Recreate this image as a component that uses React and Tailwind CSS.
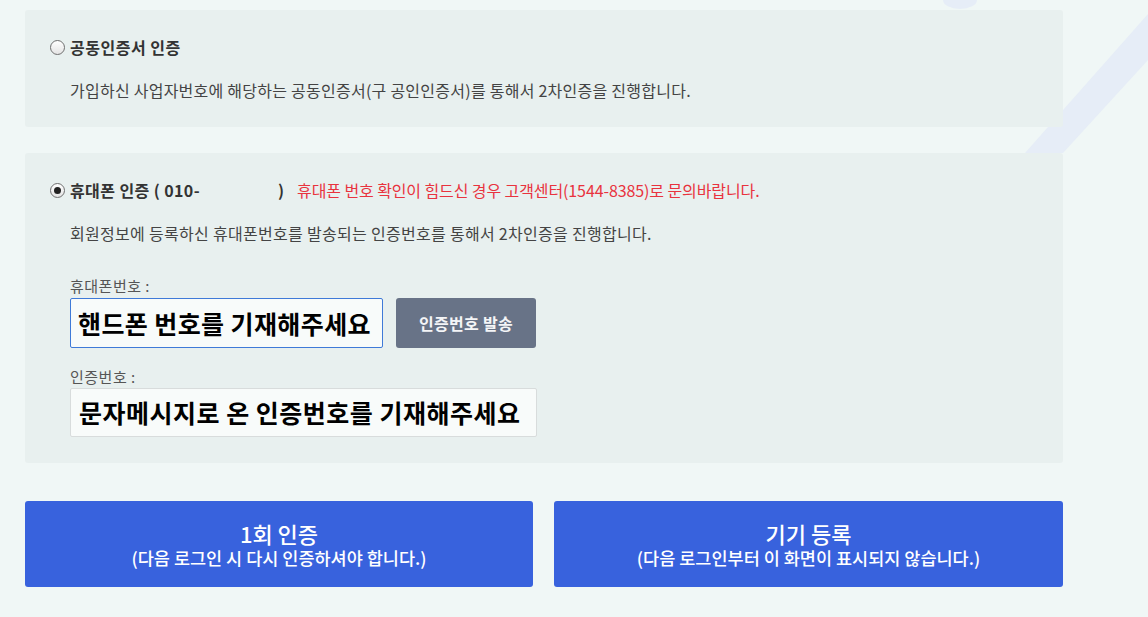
function Radio({ checked }) {
  return (
    <span className="flex h-[15px] w-[15px] shrink-0 items-center justify-center rounded-full border border-[#6f6f6f] bg-gradient-to-b from-[#ffffff] to-[#e4e4e4]">
      {checked && <span className="h-[7px] w-[7px] rounded-full bg-[#222]" />}
    </span>
  )
}

function Backdrop() {
  return (
    <svg className="pointer-events-none absolute inset-0" width="1148" height="617">
      <polygon points="1148,14 1148,60 1063,153 1025,153" fill="#e6edf7" />
      <ellipse cx="960" cy="0" rx="17" ry="9" fill="#e6edf7" />
    </svg>
  )
}

export default function App() {
  return (
    <div className="relative h-[617px] w-[1148px] overflow-hidden bg-[#f0f7f6] font-['Noto_Sans_CJK_KR','Noto_Sans',sans-serif] text-[#333]">
      <Backdrop />
      <div className="relative flex w-[1063px] flex-col pl-[25px] pt-[10px]">
        <section className="h-[117px] rounded-[3px] bg-[#e8f0ef] pl-[25px] pt-[28px]">
          <div className="flex h-[18px] items-center gap-[5px]">
            <Radio />
            <span className="text-[16px] font-bold leading-none tracking-[0.5px] text-[#333]">공동인증서 인증</span>
          </div>
          <p className="ml-[20px] mt-[26px] text-[16px] leading-none tracking-[0.25px] text-[#444]">
            가입하신 사업자번호에 해당하는 공동인증서(구 공인인증서)를 통해서 2차인증을 진행합니다.
          </p>
        </section>

        <section className="mt-[26px] h-[310px] rounded-[3px] bg-[#e8f0ef] pl-[25px] pt-[28px]">
          <div className="flex h-[18px] items-center gap-[5px]">
            <Radio checked />
            <span className="w-[203px] shrink-0 text-[16px] font-bold leading-none tracking-[0.4px] text-[#333]">
              휴대폰 인증 ( 010-
            </span>
            <span className="text-[16px] font-bold leading-none text-[#333]">)</span>
            <span className="ml-[8px] text-[16px] leading-none tracking-[-0.1px] text-[#e8333e]">
              휴대폰 번호 확인이 힘드신 경우 고객센터(1544-8385)로 문의바랍니다.
            </span>
          </div>
          <p className="ml-[20px] mt-[26px] text-[16px] leading-none tracking-[0.3px] text-[#444]">
            회원정보에 등록하신 휴대폰번호를 발송되는 인증번호를 통해서 2차인증을 진행합니다.
          </p>

          <div className="ml-[20px] mt-[37px] flex flex-col">
            <span className="text-[15px] leading-none tracking-[0.5px] text-[#555]">휴대폰번호 :</span>
            <div className="mt-[5px] flex gap-[13px]">
              <div className="flex h-[50px] w-[313px] items-center rounded-[2px] border border-[#3f7ad8] bg-[#f8fbfa] pl-[7px] text-[25px] font-bold leading-none tracking-[0.4px] text-black">
                핸드폰 번호를 기재해주세요
              </div>
              <button className="h-[50px] w-[140px] rounded-[3px] bg-[#687387] text-[16px] font-bold tracking-[0.3px] text-[#f4f5f7]">
                인증번호 발송
              </button>
            </div>
            <span className="mt-[21px] text-[15px] leading-none tracking-[0.5px] text-[#555]">인증번호 :</span>
            <div className="mt-[4px] flex h-[49px] w-[467px] items-center rounded-[2px] border border-[#d8dcdc] bg-[#f8fbfa] pl-[8px] text-[25px] font-bold leading-none tracking-[0.5px] text-black">
              문자메시지로 온 인증번호를 기재해주세요
            </div>
          </div>
        </section>

        <div className="mt-[38px] flex gap-[21px]">
          <button className="flex h-[86px] w-[508px] flex-col items-center justify-center rounded-[3px] bg-[#3862dd] text-white">
            <span className="text-[22px] font-medium leading-[24px]">1회 인증</span>
            <span className="mt-[3px] text-[17.5px] font-medium leading-[20px]">(다음 로그인 시 다시 인증하셔야 합니다.)</span>
          </button>
          <button className="flex h-[86px] w-[509px] flex-col items-center justify-center rounded-[3px] bg-[#3862dd] text-white">
            <span className="text-[22px] font-medium leading-[24px]">기기 등록</span>
            <span className="mt-[3px] text-[17.5px] font-medium leading-[20px]">(다음 로그인부터 이 화면이 표시되지 않습니다.)</span>
          </button>
        </div>
      </div>
    </div>
  )
}
